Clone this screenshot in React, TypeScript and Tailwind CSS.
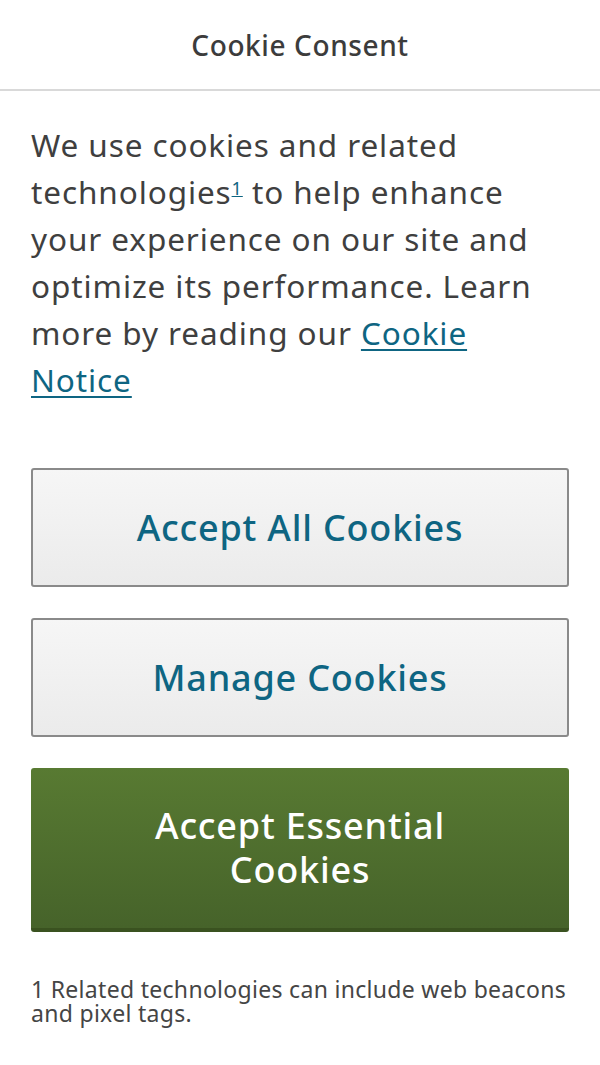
export default function App() {
    return (
        <div className="min-h-[1065px] bg-white text-[#3f3f3f]" style={{ fontFamily: '"Noto Sans", "Open Sans", sans-serif' }}>
            <header className="h-[91px] flex items-center justify-center border-b-2 border-[#d9d9d9]">
                <h1 className="text-[28px] font-medium tracking-[0.6px] text-[#3c3c3c]">Cookie Consent</h1>
            </header>
            <div className="px-[31px]">
                <p className="text-[31.5px] leading-[47px] tracking-[0.9px] pt-[30px]">
                    We use cookies and related technologies
                    <sup className="text-[18px] leading-none text-[#0e6582] underline">1</sup> to help enhance your experience on our site and optimize its performance. Learn more by reading our{" "}
                    <a href="#" className="text-[#0e6582] underline underline-offset-4 decoration-2">
                        Cookie Notice
                    </a>
                </p>
                <div className="flex flex-col gap-[31px] mt-[65px]">
                    <button className="h-[119px] rounded-[3px] border-2 border-[#8a8a8a] bg-gradient-to-b from-[#f6f6f6] to-[#ebebeb] text-[36px] font-medium tracking-[0.8px] text-[#0e6582]">
                        Accept All Cookies
                    </button>
                    <button className="h-[119px] rounded-[3px] border-2 border-[#8a8a8a] bg-gradient-to-b from-[#f6f6f6] to-[#ebebeb] text-[36px] font-medium tracking-[0.8px] text-[#0e6582]">
                        Manage Cookies
                    </button>
                    <button className="h-[164px] rounded-[3px] border-b-4 border-[#3a5220] bg-gradient-to-b from-[#587a32] to-[#46632a] text-[36px] font-medium tracking-[0.8px] text-white leading-[44px] px-[110px]">
                        Accept Essential Cookies
                    </button>
                </div>
                <p className="text-[23px] leading-[24px] tracking-[0.3px] mt-[45px] text-[#454545]">
                    1 Related technologies can include web beacons and pixel tags.
                </p>
            </div>
        </div>
    );
}
